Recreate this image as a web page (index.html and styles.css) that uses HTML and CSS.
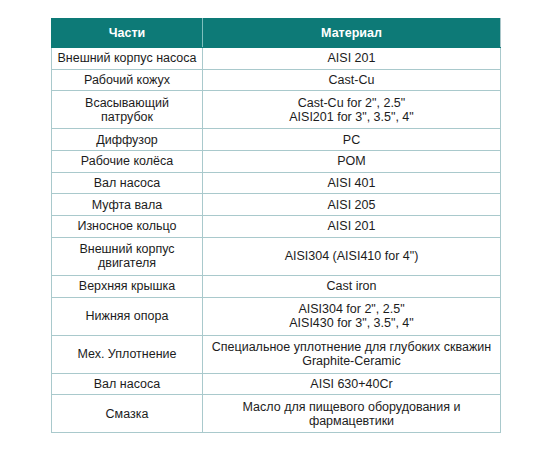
FILE: index.html
```html
<!DOCTYPE html>
<html lang="ru">
<head>
<meta charset="utf-8">
<title>Материалы</title>
<link rel="stylesheet" href="styles.css">
</head>
<body>
<table class="spec">
  <colgroup><col class="c1"><col class="c2"></colgroup>
  <thead>
    <tr><th>Части</th><th>Материал</th></tr>
  </thead>
  <tbody>
    <tr><td>Внешний корпус насоса</td><td>AISI 201</td></tr>
    <tr><td>Рабочий кожух</td><td>Cast-Cu</td></tr>
    <tr class="tall"><td>Всасывающий<br>патрубок</td><td>Cast-Cu for 2", 2.5"<br>AISI201 for 3", 3.5", 4"</td></tr>
    <tr><td>Диффузор</td><td>PC</td></tr>
    <tr><td>Рабочие колёса</td><td>POM</td></tr>
    <tr><td>Вал насоса</td><td>AISI 401</td></tr>
    <tr><td>Муфта вала</td><td>AISI 205</td></tr>
    <tr><td>Износное кольцо</td><td>AISI 201</td></tr>
    <tr class="tall"><td>Внешний корпус<br>двигателя</td><td>AISI304 (AISI410 for 4")</td></tr>
    <tr><td>Верхняя крышка</td><td>Cast iron</td></tr>
    <tr class="tall"><td>Нижняя опора</td><td>AISI304 for 2", 2.5"<br>AISI430 for 3", 3.5", 4"</td></tr>
    <tr class="tall"><td>Мех. Уплотнение</td><td>Специальное уплотнение для глубоких скважин<br>Graphite-Ceramic</td></tr>
    <tr><td>Вал насоса</td><td>AISI 630+40Cr</td></tr>
    <tr class="tall"><td>Смазка</td><td>Масло для пищевого оборудования и<br>фармацевтики</td></tr>
  </tbody>
</table>
</body>
</html>
```

FILE: styles.css
```css
html, body {
  margin: 0;
  padding: 0;
  background: #ffffff;
}
body {
  padding: 18px 0 0 51px;
  font-family: "Liberation Sans", Arial, sans-serif;
  color: #1c1c1c;
}
.spec {
  border-collapse: collapse;
  width: 449px;
  table-layout: fixed;
  font-size: 12.5px;
  line-height: 14px;
}
.c1 { width: 151px; }
.c2 { width: 298px; }
.spec th {
  background: #0d7a77;
  color: #ffffff;
  font-weight: bold;
  height: 28px;
  padding: 0;
  text-align: center;
  border: 1px solid #0d7a77;
  border-right-color: #7fbfbd;
}
.spec th:last-child {
  border-right-color: #a9c6c9;
}
.spec td {
  border: 1px solid #a9c9cc;
  text-align: center;
  vertical-align: middle;
  padding: 0 2px;
  height: 20.7px;
}
.spec tr.tall td {
  height: 37px;
}
```
